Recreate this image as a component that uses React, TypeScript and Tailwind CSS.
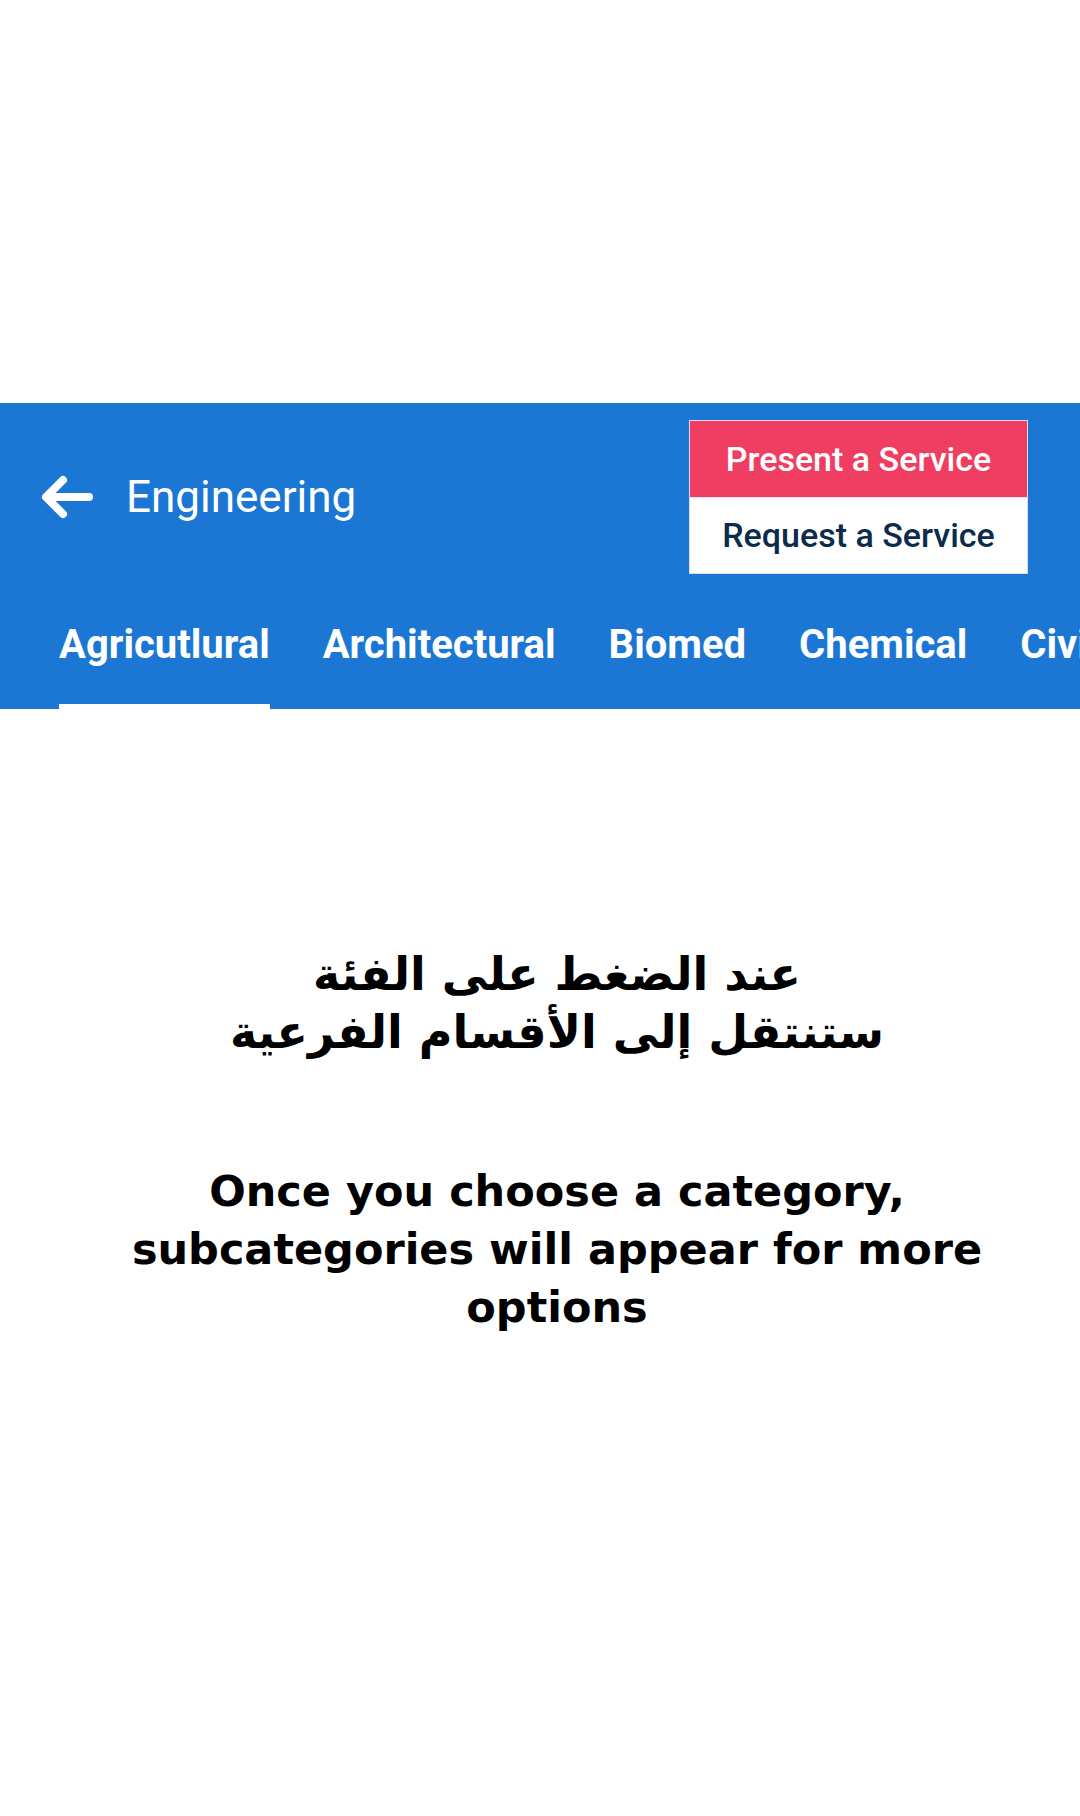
import React from "react";

const tabs = ["Agricutlural", "Architectural", "Biomed", "Chemical", "Civil"];

export default function App() {
  return (
    <div className="w-[1080px] h-[1816px] bg-white overflow-hidden" style={{ fontFamily: "Roboto, 'Liberation Sans', sans-serif" }}>
      <div className="h-[403px]" />
      <div className="bg-[#1b77d3] h-[306px] flex flex-col">
        <div className="h-[177px] flex items-start justify-between pt-[17px] pr-[52px]">
          <div className="h-[153px] flex items-center pl-[38px]">
            <svg width="56" height="50" viewBox="0 0 56 50" fill="none" stroke="white" strokeWidth="8" strokeLinecap="round" strokeLinejoin="round">
              <path d="M51 25 H9" />
              <path d="M25 8 L8 25 L25 42" />
            </svg>
            <span className="ml-[32px] text-white text-[44px] leading-none font-normal">Engineering</span>
          </div>
          <div className="w-[339px] flex flex-col border border-[#dcdcdc] bg-white">
            <div className="h-[76px] bg-[#ef3e61] flex items-center justify-center text-white text-[34px] font-medium">
              Present a Service
            </div>
            <div className="h-[1px] bg-[#e6e6e6]" />
            <div className="h-[75px] bg-white flex items-center justify-center text-[#0b2c4b] text-[34px] font-medium">
              Request a Service
            </div>
          </div>
        </div>
        <div className="h-[129px] flex items-stretch gap-[53px] pl-[59px] overflow-hidden whitespace-nowrap">
          {tabs.map((t, i) => (
            <div key={t} className="relative flex items-center shrink-0">
              <span className="text-white text-[40px] font-bold leading-none">{t}</span>
              {i === 0 && <div className="absolute left-0 right-0 bottom-0 h-[5px] bg-white" />}
            </div>
          ))}
        </div>
      </div>
      <div className="pl-[34px] pt-[236px] text-center text-black font-bold" style={{ fontFamily: "'DejaVu Sans', sans-serif" }}>
        <div dir="rtl" className="text-[46px] leading-[58px]">
          عند الضغط على الفئة
          <br />
          ستنتقل إلى الأقسام الفرعية
        </div>
        <div className="mt-[101px] text-[43px] leading-[58px]">
          Once you choose a category,
          <br />
          subcategories will appear for more
          <br />
          options
        </div>
      </div>
    </div>
  );
}
